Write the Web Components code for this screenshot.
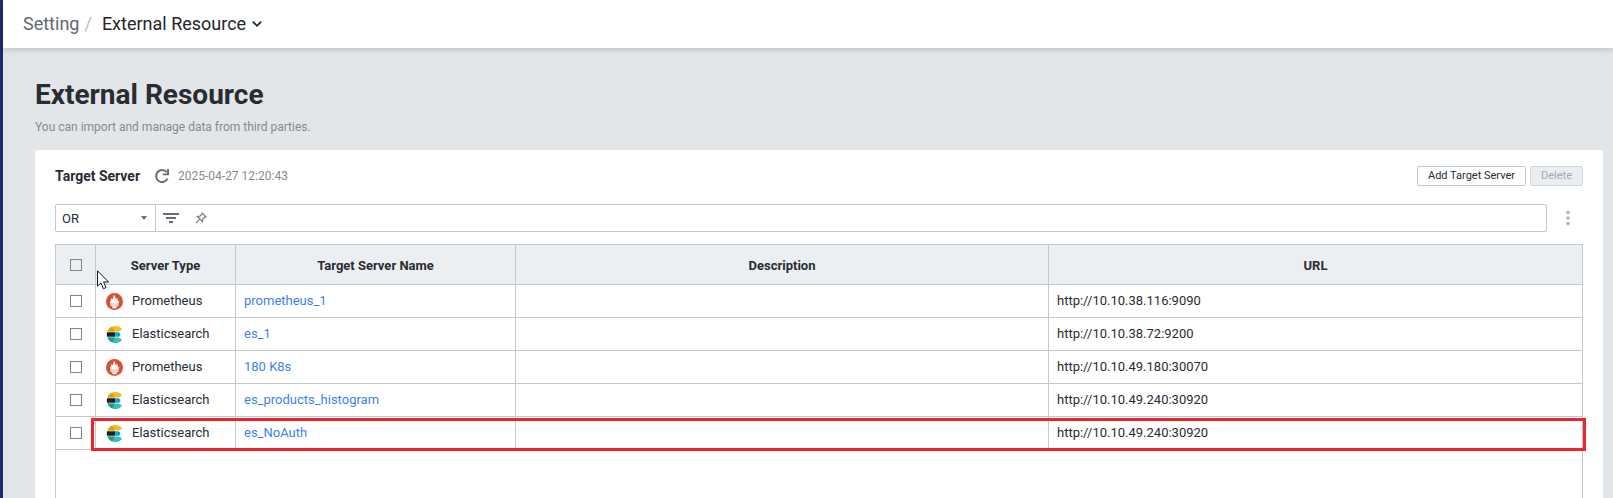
<!DOCTYPE html>
<html lang="en">
<head>
<meta charset="utf-8">
<title>External Resource</title>
<style>
  html, body {
    height: 100%;
    margin: 0;
  }
  body {
    font-family: Roboto, "Liberation Sans", sans-serif;
    font-size: 13px;
    color: #292c32;
    background: #e2e6e9;
    overflow: hidden;
  }
</style>
</head>
<body>
<app-shell>
  <bread-crumb slot="header" parent="Setting" current="External Resource"></bread-crumb>
  <page-title heading="External Resource">You can import and manage data from third parties.</page-title>
  <content-panel>
    <panel-toolbar heading="Target Server" updated="2025-04-27 12:20:43">
      <action-button>Add Target Server</action-button>
      <action-button disabled>Delete</action-button>
    </panel-toolbar>
    <filter-bar></filter-bar>
    <server-table></server-table>
  </content-panel>
</app-shell>

<script>
(function () {
  function attach(el, html) {
    let tmpl = document.createElement('template');
    tmpl.innerHTML = html;
    let shadowRoot = el.attachShadow({ mode: 'open' });
    shadowRoot.appendChild(tmpl.content.cloneNode(true));
    return shadowRoot;
  }

  const checkStyle = `
    input[type=checkbox] {
      appearance: none;
      display: block;
      box-sizing: border-box;
      width: 12px;
      height: 12px;
      margin: 0 auto;
      border: 1px solid #7d8491;
      background: #fff;
    }
    input[type=checkbox]:checked {
      background: #3f7ff0;
    }
  `;

  class AppShell extends HTMLElement {
    connectedCallback() {
      attach(this, `
        <style>
          :host {
            display: flex;
            flex-direction: column;
            box-sizing: border-box;
            height: 100vh;
            border-left: 3px solid #1c2c6c;
          }
          header {
            display: flex;
            align-items: center;
            flex: none;
            height: 48px;
            padding: 0 20px;
            background: #fff;
            box-shadow: 0 2px 6px rgba(0, 0, 0, 0.16);
          }
          main {
            display: flex;
            flex-direction: column;
            flex: 1;
            min-height: 0;
            padding: 30px 10px 0 32px;
          }
        </style>
        <header><slot name="header"></slot></header>
        <main><slot></slot></main>
      `);
    }
  }

  class BreadCrumb extends HTMLElement {
    connectedCallback() {
      attach(this, `
        <style>
          :host { display: block; font-size: 18px; line-height: 24px; }
          nav { display: flex; align-items: center; }
          a { color: #63676f; text-decoration: none; }
          .sep { color: #b9bdc4; padding: 0 10px 0 5px; }
          button {
            display: flex;
            align-items: center;
            gap: 6px;
            padding: 0;
            border: 0;
            background: none;
            font: inherit;
            color: #23262c;
          }
        </style>
        <nav>
          <a href="#">${this.getAttribute('parent')}</a>
          <span class="sep">/</span>
          <button type="button">${this.getAttribute('current')}
            <svg width="10" height="8" viewBox="0 0 10 8" fill="none" stroke="#23262c" stroke-width="1.8"><path d="M0.8 1.6L5 5.8L9.2 1.6"/></svg>
          </button>
        </nav>
      `);
    }
  }

  class PageTitle extends HTMLElement {
    connectedCallback() {
      attach(this, `
        <style>
          :host { display: block; flex: none; }
          h1 { margin: 0; font-size: 28px; line-height: 34px; font-weight: 700; color: #292c32; }
          p { margin: 7px 0 15px; font-size: 12px; line-height: 16px; color: #858a91; }
        </style>
        <h1>${this.getAttribute('heading')}</h1>
        <p><slot></slot></p>
      `);
    }
  }

  class ContentPanel extends HTMLElement {
    connectedCallback() {
      attach(this, `
        <style>
          :host {
            display: flex;
            flex-direction: column;
            flex: 1;
            min-height: 0;
            padding: 16px 20px 0;
            background: #fff;
            border-radius: 2px 2px 0 0;
          }
        </style>
        <slot></slot>
      `);
    }
  }

  class PanelToolbar extends HTMLElement {
    connectedCallback() {
      attach(this, `
        <style>
          :host { display: flex; align-items: center; flex: none; height: 20px; }
          h2 { margin: 0 14px 0 0; font-size: 14px; line-height: 20px; font-weight: 700; }
          button { display: flex; padding: 0; border: 0; background: none; }
          time { margin-left: 8px; color: #858a91; font-size: 12px; line-height: 20px; }
          .actions { display: flex; gap: 4px; margin-left: auto; }
        </style>
        <h2>${this.getAttribute('heading')}</h2>
        <button type="button" aria-label="Refresh">
          <svg width="16" height="16" viewBox="0 0 16 16"><path d="M13.6 10.6A6 6 0 1 1 12.8 4.2" fill="none" stroke="#686d77" stroke-width="2"/><path d="M15 1V7.2H8.8V5.4H13.1V1Z" fill="#686d77"/></svg>
        </button>
        <time>${this.getAttribute('updated')}</time>
        <div class="actions"><slot></slot></div>
      `);
    }
  }

  class ActionButton extends HTMLElement {
    connectedCallback() {
      attach(this, `
        <style>
          :host { display: block; }
          button {
            display: block;
            box-sizing: border-box;
            height: 20px;
            padding: 0 10px;
            border: 1px solid #c4c7cd;
            border-radius: 2px;
            background: #fff;
            font: inherit;
            font-size: 11px;
            line-height: 18px;
            color: #292c32;
          }
          button:disabled { background: #ebeef1; border-color: #d3d7dc; color: #a3a8b0; }
        </style>
        <button type="button" ${this.hasAttribute('disabled') ? 'disabled' : ''}><slot></slot></button>
      `);
    }
  }

  class FilterBar extends HTMLElement {
    connectedCallback() {
      attach(this, `
        <style>
          :host { display: flex; align-items: center; flex: none; margin: 18px 0 12px; }
          .box {
            display: flex;
            align-items: center;
            flex: 1;
            box-sizing: border-box;
            height: 28px;
            border: 1px solid #c4c7cd;
            border-radius: 2px;
          }
          .mode {
            display: flex;
            align-items: center;
            box-sizing: border-box;
            width: 100px;
            height: 26px;
            padding-right: 8px;
            border-right: 1px solid #c4c7cd;
          }
          select {
            appearance: none;
            flex: 1;
            height: 26px;
            padding: 0 6px;
            border: 0;
            background: none;
            font: inherit;
            color: inherit;
          }
          button { display: flex; padding: 0; border: 0; background: none; }
          .filter { margin-left: 7px; }
          .pin { margin: 0 8px 0 16px; }
          input {
            flex: 1;
            min-width: 0;
            height: 24px;
            padding: 0;
            border: 0;
            outline: 0;
            background: none;
            font: inherit;
            color: inherit;
          }
          .more { padding: 6px 13px 6px 19px; }
        </style>
        <div class="box">
          <div class="mode">
            <select aria-label="Filter mode"><option>OR</option><option>AND</option></select>
            <svg width="6" height="4" viewBox="0 0 6 4"><path d="M0 0H6L3 4Z" fill="#686d77"/></svg>
          </div>
          <button type="button" class="filter" aria-label="Filter">
            <svg width="16" height="10" viewBox="0 0 16 10" fill="#686d77"><path d="M0 0H16V2H0ZM3 4H13V6H3ZM6 8H10V10H6Z"/></svg>
          </button>
          <button type="button" class="pin" aria-label="Pin">
            <svg width="12" height="12" viewBox="0 0 14 14" fill="none" stroke="#737882" stroke-width="1.4"><path d="M8.4 1.3L12.7 5.6L11.4 5.9L9.1 8.2L8.8 11.2L2.8 5.2L5.8 4.9L8.1 2.6ZM5.6 8.4L1 13"/></svg>
          </button>
          <input type="text" aria-label="Search">
        </div>
        <button type="button" class="more" aria-label="More">
          <svg width="4" height="16" viewBox="0 0 4 16" fill="#a9afb8"><circle cx="2" cy="2.5" r="1.7"/><circle cx="2" cy="8" r="1.7"/><circle cx="2" cy="13.5" r="1.7"/></svg>
        </button>
      `);
    }
  }

  class TypeIcon extends HTMLElement {
    connectedCallback() {
      const icons = {
        Prometheus: `
          <circle cx="8" cy="8" r="8" fill="#da4e31"/>
          <path d="M4.1 10.1L3.5 7.4L4.6 8C4.2 6.5 4.9 5.8 5.2 4.7C5.7 5.3 5.8 5.9 6 6.3C6.5 4.8 7.1 3.8 7.4 1.7C8.7 3 8.8 4.8 9.4 6.3C9.9 5.7 9.9 5 10 4.2C10.9 5.4 11.4 6.5 11.2 8L12.5 7.3L11.9 10.1ZM4.1 10.7H11.9V11.9H4.1ZM5.3 12.5H10.7C10.4 13.8 9.2 14.5 8 14.5S5.6 13.8 5.3 12.5Z" fill="#fff"/>`,
        Elasticsearch: `
          <path d="M1.4 5.2C2.6 2 5.4 0 8.8 0C11.4 0 13.6 1.1 15 3C14 4.5 12.7 5.2 11 5.2Z" fill="#f0bf1a"/>
          <path d="M1.4 5.2C2.2 3 3.7 1.5 5.5 0.7C6.9 1.7 7.5 3.2 8 5.2Z" fill="#d5a021"/>
          <path d="M1 5.8H8.6V10.2H1C0.6 8.7 0.6 7.3 1 5.8Z" fill="#231f20"/>
          <path d="M8.6 5.8H11.3C12.6 5.8 13.5 6.8 13.5 8S12.6 10.2 11.3 10.2H8.6Z" fill="#07a5de"/>
          <path d="M1.4 10.8H11.2C12.9 10.8 14.2 11.6 15 13.1C13.5 15 11.4 16 8.8 16C5.4 16 2.6 14 1.4 10.8Z" fill="#3ebeb0"/>
          <path d="M1.4 10.8H8C7.6 12.9 6.9 14.3 5.5 15.3C3.7 14.5 2.2 13 1.4 10.8Z" fill="#17a08f"/>`
      };
      attach(this, `
        <style>
          :host { display: block; width: 17px; height: 17px; }
          svg { display: block; }
        </style>
        <svg width="17" height="17" viewBox="0 0 16 16" aria-hidden="true">${icons[this.getAttribute('type')]}</svg>
      `);
    }
  }

  const servers = [
    { type: 'Prometheus', name: 'prometheus_1', url: 'http://10.10.38.116:9090' },
    { type: 'Elasticsearch', name: 'es_1', url: 'http://10.10.38.72:9200' },
    { type: 'Prometheus', name: '180 K8s', url: 'http://10.10.49.180:30070' },
    { type: 'Elasticsearch', name: 'es_products_histogram', url: 'http://10.10.49.240:30920' },
    { type: 'Elasticsearch', name: 'es_NoAuth', url: 'http://10.10.49.240:30920', marked: true }
  ];

  class ServerTable extends HTMLElement {
    connectedCallback() {
      const rows = servers.map((s) => `
        <tr>
          <td><input type="checkbox" aria-label="Select ${s.name}">${s.marked ? '<div class="mark"></div>' : ''}</td>
          <td><div class="type"><type-icon type="${s.type}"></type-icon><span>${s.type}</span></div></td>
          <td><a href="#">${s.name}</a></td>
          <td></td>
          <td>${s.url}</td>
        </tr>`).join('');
      attach(this, `
        <style>
          ${checkStyle}
          :host {
            display: block;
            flex: 1;
            position: relative;
            border: 1px solid #c4c7cd;
            border-bottom: 0;
          }
          table { width: 100%; table-layout: fixed; border-collapse: separate; border-spacing: 0; }
          th, td {
            box-sizing: border-box;
            padding: 0 8px;
            border-right: 1px solid #c4c7cd;
            border-bottom: 1px solid #c4c7cd;
            text-align: left;
            line-height: 16px;
          }
          th { height: 40px; padding-top: 2px; background: #ebeff2; font-weight: 700; text-align: center; }
          td { height: 33px; }
          th:last-child, td:last-child { border-right: 0; }
          th:first-child, td:first-child { padding: 0; }
          th input[type=checkbox] { background: none; }
          tr { position: relative; }
          .check { width: 40px; }
          .kind { width: 140px; }
          .name { width: 280px; }
          .type { display: flex; align-items: center; gap: 9px; padding-left: 2px; }
          a { color: #3f7ff0; text-decoration: none; }
          /* outline drawn over the marked row */
          .mark {
            position: absolute;
            inset: 1px -4px -1px 35px;
            border: 3px solid #ee242c;
            pointer-events: none;
          }
          .pointer { position: absolute; left: 41px; top: 25px; }
        </style>
        <table>
          <thead>
            <tr>
              <th class="check"><input type="checkbox" aria-label="Select all"></th>
              <th class="kind">Server Type</th>
              <th class="name">Target Server Name</th>
              <th>Description</th>
              <th>URL</th>
            </tr>
          </thead>
          <tbody>${rows}</tbody>
        </table>
        <svg class="pointer" width="13" height="20" viewBox="0 0 13 20"><path d="M0.5 0.8V16.2L4 12.9L6.4 18.7L9 17.6L6.6 12H11.5Z" fill="#fff" stroke="#15151f"/></svg>
      `);
    }
  }

  customElements.define('type-icon', TypeIcon);
  customElements.define('action-button', ActionButton);
  customElements.define('bread-crumb', BreadCrumb);
  customElements.define('page-title', PageTitle);
  customElements.define('panel-toolbar', PanelToolbar);
  customElements.define('filter-bar', FilterBar);
  customElements.define('server-table', ServerTable);
  customElements.define('content-panel', ContentPanel);
  customElements.define('app-shell', AppShell);
})();
</script>
</body>
</html>
